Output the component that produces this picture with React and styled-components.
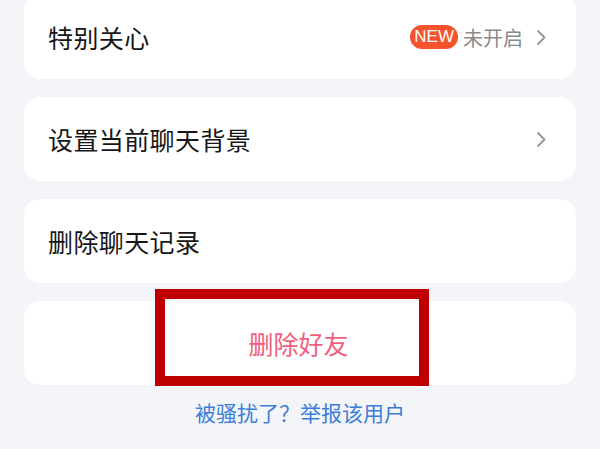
import React from 'react';
import styled, { createGlobalStyle } from 'styled-components';

const GlobalStyle = createGlobalStyle`
  html, body {
    margin: 0;
    padding: 0;
    background: #f4f5f9;
    overflow: hidden;
  }
  body {
    font-family: "Noto Sans CJK SC", "Noto Sans", sans-serif;
  }
`;

const Page = styled.div`
  width: 600px;
  height: 449px;
  box-sizing: border-box;
  padding: 0 24px;
  margin-top: -5px;
  display: flex;
  flex-direction: column;
  gap: 18px;
`;

const Card = styled.div`
  position: relative;
  height: 84px;
  background: #ffffff;
  border-radius: 16px;
  display: flex;
  align-items: center;
  justify-content: ${props => (props.center ? 'center' : 'space-between')};
  padding: 0 30px 0 24px;
  box-sizing: border-box;
`;

const Title = styled.span`
  font-size: 25px;
  color: #161616;
  letter-spacing: 0.4px;
`;

const DangerText = styled.span`
  font-size: 25px;
  color: #f0607d;
  margin-left: 3px;
`;

const Trailing = styled.div`
  display: flex;
  align-items: center;
`;

const Badge = styled.span`
  height: 24px;
  padding: 0 4px;
  border-radius: 12px;
  background: #f5532d;
  color: #ffffff;
  font-family: "Liberation Sans", Arial, sans-serif;
  font-size: 17px;
  line-height: 24px;
  margin-right: 5px;
`;

const Status = styled.span`
  font-size: 20px;
  color: #8a8a8a;
  margin-right: 13px;
`;

const Highlight = styled.div`
  position: absolute;
  left: 131px;
  top: -12px;
  width: 274px;
  height: 97px;
  box-sizing: border-box;
  border: 10px solid #bf0000;
  pointer-events: none;
`;

const Report = styled.div`
  margin-top: -6px;
  text-align: center;
  font-size: 21px;
  color: #3a7ed8;
`;

function Chevron() {
  return (
    <svg width="10" height="17" viewBox="0 0 10 17">
      <path d="M2 2 L8.5 8.5 L2 15" fill="none" stroke="#969696" strokeWidth="1.8" strokeLinecap="round" strokeLinejoin="round" />
    </svg>
  );
}

export default function App() {
  return (
    <>
      <GlobalStyle />
      <Page>
        <Card>
          <Title>特别关心</Title>
          <Trailing>
            <Badge>NEW</Badge>
            <Status>未开启</Status>
            <Chevron />
          </Trailing>
        </Card>
        <Card>
          <Title>设置当前聊天背景</Title>
          <Chevron />
        </Card>
        <Card>
          <Title>删除聊天记录</Title>
        </Card>
        <Card center>
          <DangerText>删除好友</DangerText>
          <Highlight />
        </Card>
        <Report>被骚扰了？举报该用户</Report>
      </Page>
    </>
  );
}
